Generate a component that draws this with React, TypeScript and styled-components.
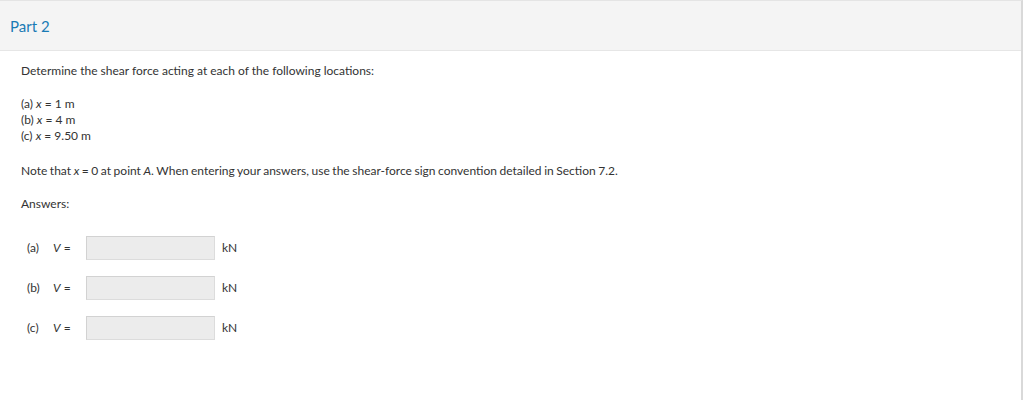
import styled, { createGlobalStyle } from "styled-components";

const GlobalStyle = createGlobalStyle`
  html, body {
    margin: 0;
    padding: 0;
    background: #ffffff;
  }
  body {
    font-family: Lato, "Liberation Sans", sans-serif;
    color: #333333;
  }
`;

const Panel = styled.div`
  width: 1023px;
  height: 400px;
  border-top: 1px solid #e4e4e4;
  border-right: 2px solid #d9d9d9;
  box-sizing: border-box;
  background: #ffffff;
`;

const Header = styled.div`
  height: 49px;
  background: #f4f4f4;
  border-bottom: 1px solid #e6e6e6;
  display: flex;
  align-items: center;
  padding-left: 10px;
`;

const Title = styled.h2`
  margin: 0;
  font-size: 15px;
  font-weight: 400;
  color: #1a7bb5;
`;

const Body = styled.div`
  padding: 12px 21px 0;
  font-size: 12px;
  line-height: 16px;
`;

const Para = styled.p<{ $gap?: number }>`
  margin: 0 0 ${(p) => p.$gap ?? 16}px;
`;

const Note = styled(Para)`
  word-spacing: -0.5px;
`;

const Var = styled.i`
  font-style: italic;
`;

const Answers = styled.div`
  display: flex;
  flex-direction: column;
  gap: 16px;
  margin-top: 24px;
  padding-left: 6px;
`;

const Row = styled.div`
  display: flex;
  align-items: center;
  height: 24px;
`;

const Label = styled.span`
  width: 26px;
`;

const Eq = styled.span`
  width: 33px;
`;

const Field = styled.input`
  width: 129px;
  height: 24px;
  box-sizing: border-box;
  background: #ececec;
  border: 1px solid #dcdcdc;
  border-top-color: #d2d2d2;
  border-left-color: #d2d2d2;
  margin: 0;
  padding: 0 6px;
  font: inherit;
`;

const Unit = styled.span`
  margin-left: 7px;
`;

const rows = ["a", "b", "c"];

export default function App() {
  return (
    <>
      <GlobalStyle />
      <Panel>
        <Header>
          <Title>Part 2</Title>
        </Header>
        <Body>
          <Para $gap={17}>Determine the shear force acting at each of the following locations:</Para>
          <Para $gap={19}>
            (a) <Var>x</Var> = 1 m
            <br />
            (b) <Var>x</Var> = 4 m
            <br />
            (c) <Var>x</Var> = 9.50 m
          </Para>
          <Note $gap={17}>
            Note that <Var>x</Var> = 0 at point <Var>A</Var>. When entering your answers, use the
            shear-force sign convention detailed in Section 7.2.
          </Note>
          <Para $gap={0}>Answers:</Para>
          <Answers>
            {rows.map((r) => (
              <Row key={r}>
                <Label>({r})</Label>
                <Eq>
                  <Var>V</Var> =
                </Eq>
                <Field type="text" />
                <Unit>kN</Unit>
              </Row>
            ))}
          </Answers>
        </Body>
      </Panel>
    </>
  );
}
